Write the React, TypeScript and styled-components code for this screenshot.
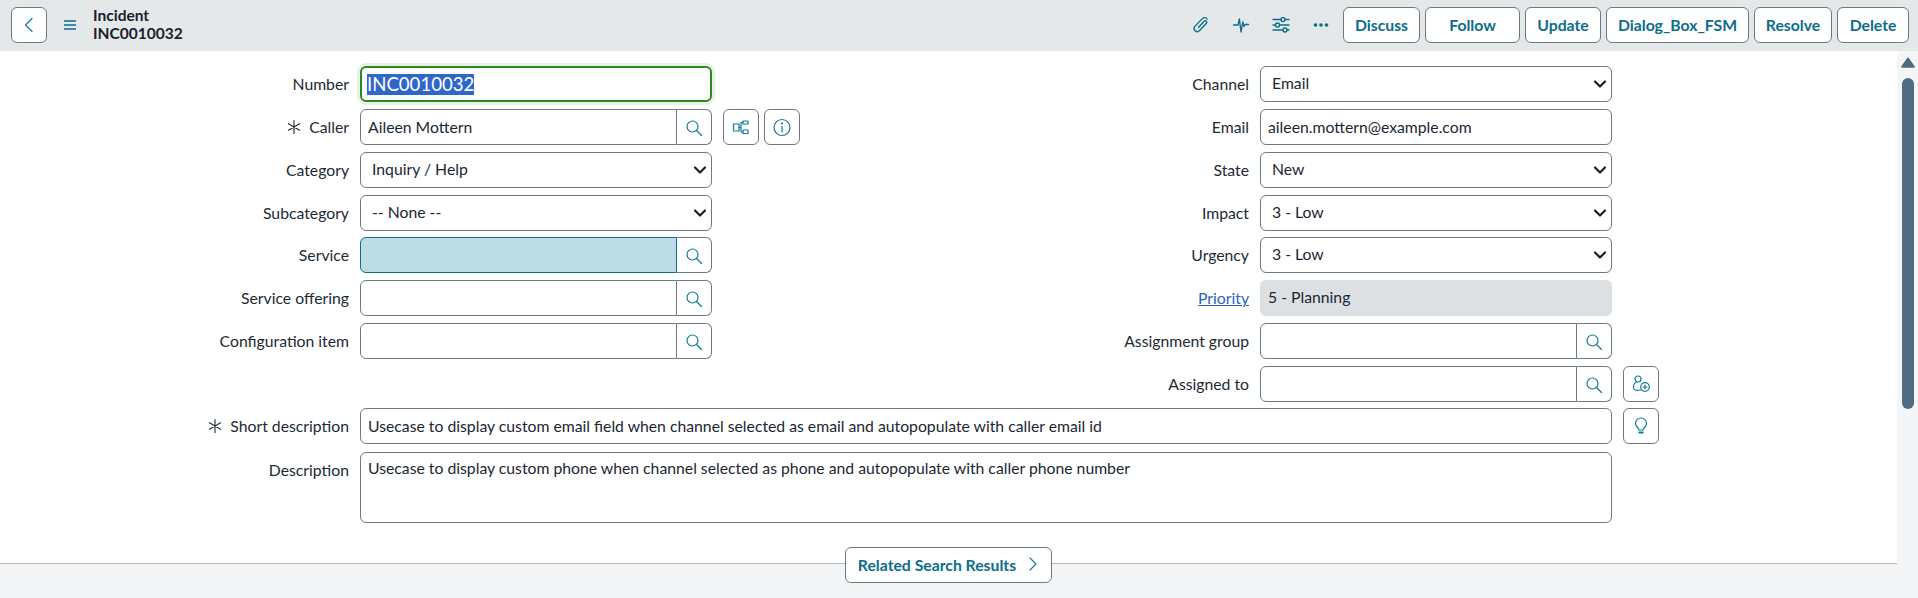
import React from "react";
import styled, { createGlobalStyle } from "styled-components";

const Global = createGlobalStyle`
  html, body { margin: 0; padding: 0; height: 100%; overflow: hidden; background: #fff; }
  * { box-sizing: border-box; }
  #root { height: 100%; }
`;

const TEAL = "#0c6d8c";
const ICON = "#137a9c";
const BORDER = "#6e7a83";
const TEXT = "#1a2733";
const FS = "15.75px";

const Page = styled.div`
  height: 598px;
  display: flex;
  flex-direction: column;
  font-family: Lato, "Liberation Sans", sans-serif;
  color: ${TEXT};
`;
const Header = styled.header`
  height: 51px;
  flex: none;
  background: #e4e8e9;
  display: flex;
  align-items: center;
  padding: 0 9px 1px 11px;
`;
const BackButton = styled.button`
  width: 36px;
  height: 36px;
  padding: 0;
  border: 1px solid ${BORDER};
  border-radius: 6px;
  background: #fff;
  display: flex;
  align-items: center;
  justify-content: center;
`;
const MenuIcon = styled.span`
  display: flex;
  margin: 0 16px 0 16px;
`;
const Title = styled.div`
  font-size: 15.5px;
  line-height: 18px;
  font-weight: 700;
  color: #17222c;
  margin-top: -2px;
`;
const Spacer = styled.div`
  flex: 1;
`;
const ToolIcons = styled.div`
  display: flex;
  align-items: center;
  margin-right: 2px;
`;
const ToolIcon = styled.span`
  width: 40px;
  display: flex;
  justify-content: center;
`;
const Actions = styled.div`
  display: flex;
  gap: 5px;
`;
const ActionButton = styled.button<{ $w: number }>`
  width: ${(p) => p.$w}px;
  height: 36px;
  padding: 0 0 2px;
  border: 1px solid ${BORDER};
  border-radius: 6px;
  background: #fff;
  color: ${TEAL};
  font: 700 ${FS} Lato, sans-serif;
`;
const Body = styled.div`
  flex: 1;
  display: flex;
  min-height: 0;
`;
const Main = styled.main`
  flex: 1;
  position: relative;
  display: flex;
  flex-direction: column;
  min-width: 0;
`;
const FormArea = styled.form`
  height: 513px;
  flex: none;
  background: #fff;
  border-bottom: 1px solid #b3b8bc;
  padding-top: 15.4px;
`;
const Footer = styled.div`
  flex: 1;
  background: #f4f5f7;
`;
const Columns = styled.div`
  display: grid;
  grid-template-columns: 900px 1fr;
`;
const Column = styled.div`
  display: flex;
  flex-direction: column;
  gap: 6.75px;
`;
const FullRows = styled.div`
  display: flex;
  flex-direction: column;
  gap: 8px;
  margin-top: 6.75px;
`;
const Field = styled.div<{ $wide?: boolean }>`
  display: flex;
  align-items: flex-start;
  height: ${(p) => (p.$wide ? "auto" : "36px")};
`;
const Label = styled.label`
  width: 349px;
  flex: none;
  height: 36px;
  padding-bottom: 1px;
  display: flex;
  align-items: center;
  justify-content: flex-end;
  gap: 7px;
  margin-right: 11px;
  font-size: ${FS};
  color: #1d2a35;
`;
const LinkLabel = styled.a`
  color: #2b63c4;
  text-decoration: underline;
`;
const Control = styled.div<{ $w: number }>`
  width: ${(p) => p.$w}px;
  flex: none;
  position: relative;
`;
const TextInput = styled.input`
  display: block;
  width: 100%;
  height: 36px;
  padding: 0 7px 2px;
  border: 1px solid ${BORDER};
  border-radius: 6px;
  background: #fff;
  color: ${TEXT};
  font: ${FS} Lato, sans-serif;
  outline: none;
`;
const FocusBox = styled.div`
  height: 36px;
  padding: 0 5px;
  border: 2px solid #2b8a1e;
  border-radius: 6px;
  background: #fff;
  box-shadow: 0 0 0 3px #e7f1e4;
  display: flex;
  align-items: center;
  font-size: 18.6px;
`;
const Selected = styled.span`
  background: #2f66cc;
  color: #fff;
  line-height: 21px;
`;
const ReadOnly = styled.div`
  height: 36px;
  padding: 0 8px 3px;
  border-radius: 6px;
  background: #dde0e3;
  display: flex;
  align-items: center;
  font-size: ${FS};
`;
const Select = styled.select`
  display: block;
  width: 100%;
  height: 36px;
  padding: 0 30px 3px 11px;
  border: 1px solid ${BORDER};
  border-radius: 6px;
  background: #fff;
  color: ${TEXT};
  font: ${FS} Lato, sans-serif;
  appearance: none;
  outline: none;
`;
const Chevron = styled.span`
  position: absolute;
  right: 5px;
  top: 11px;
  display: flex;
  pointer-events: none;
`;
const Lookup = styled.div`
  display: flex;
  height: 36px;
`;
const LookupInput = styled.input<{ $mandatory?: boolean }>`
  flex: 1;
  min-width: 0;
  height: 36px;
  padding: 0 7px 2px;
  border: 1px solid ${(p) => (p.$mandatory ? TEAL : BORDER)};
  border-radius: 6px 0 0 6px;
  background: ${(p) => (p.$mandatory ? "#bcdde6" : "#fff")};
  color: ${TEXT};
  font: ${FS} Lato, sans-serif;
  outline: none;
`;
const LookupButton = styled.button`
  width: 35px;
  flex: none;
  height: 36px;
  padding: 0;
  border: 1px solid ${BORDER};
  border-left: none;
  border-radius: 0 6px 6px 0;
  background: #fff;
  display: flex;
  align-items: center;
  justify-content: center;
`;
const SideButtons = styled.div<{ $offset: number }>`
  display: flex;
  gap: 5px;
  margin-left: ${(p) => p.$offset}px;
`;
const SideButton = styled.button`
  width: 36px;
  height: 36px;
  padding: 0;
  border: 1px solid ${BORDER};
  border-radius: 6px;
  background: #fff;
  display: flex;
  align-items: center;
  justify-content: center;
`;
const TextArea = styled.textarea`
  display: block;
  width: 100%;
  height: 71px;
  padding: 5px 7px;
  border: 1px solid ${BORDER};
  border-radius: 6px;
  background: #fff;
  color: ${TEXT};
  font: ${FS}/20px Lato, sans-serif;
  resize: none;
  outline: none;
`;
const Pill = styled.button`
  position: absolute;
  top: 496px;
  left: 845px;
  width: 207px;
  height: 36px;
  padding: 0 0 2px 1px;
  border: 1px solid ${BORDER};
  border-radius: 6px;
  background: #fff;
  color: ${TEAL};
  font: 700 ${FS} Lato, sans-serif;
  display: flex;
  align-items: center;
  justify-content: center;
  gap: 10px;
`;
const Scrollbar = styled.aside`
  width: 21px;
  flex: none;
  background: #f4f5f7;
  padding: 6px 4px 0 5px;
  display: flex;
  flex-direction: column;
  align-items: center;
`;
const ScrollArrow = styled.span`
  display: flex;
`;
const ScrollThumb = styled.div`
  width: 12px;
  height: 331px;
  margin-top: 10px;
  border-radius: 6px;
  background: #4f6b7f;
`;

const stroke = { fill: "none", stroke: ICON, strokeWidth: 1.2, strokeLinecap: "round" as const, strokeLinejoin: "round" as const };
const toolStroke = { ...stroke, stroke: TEAL, strokeWidth: 1.35 };

const SearchIcon = () => (
  <svg width="18" height="18" viewBox="0 -1 18 18" {...stroke}>
    <circle cx="7.5" cy="7.5" r="5.5" />
    <path d="M11.5 11.5 L16.5 16.5" />
  </svg>
);
const Star = () => (
  <svg width="16" height="16" viewBox="0 0 16 16" fill="none" stroke="#1d2a35" strokeWidth="1.1" strokeLinecap="round">
    <path d="M8 1.5V14.5M2.4 4.8L13.6 11.2M13.6 4.8L2.4 11.2" />
  </svg>
);
const DownChevron = () => (
  <svg width="14" height="14" viewBox="0 0 14 14" fill="none" stroke="#1a2026" strokeWidth="2.2" strokeLinecap="round" strokeLinejoin="round">
    <path d="M2 4.5L7 9.5L12 4.5" />
  </svg>
);

function SelectBox({ value, options }: { value: string; options?: string[] }) {
  return (
    <Control $w={351.5}>
      <Select defaultValue={value}>
        {(options || [value]).map((o) => (
          <option key={o}>{o}</option>
        ))}
      </Select>
      <Chevron>
        <DownChevron />
      </Chevron>
    </Control>
  );
}
function LookupBox({ value, mandatory }: { value?: string; mandatory?: boolean }) {
  return (
    <Control $w={351.5}>
      <Lookup>
        <LookupInput $mandatory={mandatory} defaultValue={value} />
        <LookupButton type="button" aria-label="Search">
          <SearchIcon />
        </LookupButton>
      </Lookup>
    </Control>
  );
}

const ACTIONS: [string, number][] = [
  ["Discuss", 77],
  ["Follow", 95],
  ["Update", 76],
  ["Dialog_Box_FSM", 143],
  ["Resolve", 78],
  ["Delete", 72],
];

export default function App() {
  return (
    <Page>
      <Global />
      <Header>
        <BackButton aria-label="Back">
          <svg width="18" height="18" viewBox="0 0 18 18" {...stroke}>
            <path d="M12 2.5L5.5 9L12 15.5" />
          </svg>
        </BackButton>
        <MenuIcon>
          <svg width="14" height="12" viewBox="0 0 14 12" fill="none" stroke={TEAL} strokeWidth="1.3">
            <path d="M1 2H13M1 6H13M1 10H13" />
          </svg>
        </MenuIcon>
        <Title>
          Incident
          <br />
          INC0010032
        </Title>
        <Spacer />
        <ToolIcons>
          <ToolIcon>
            <svg width="18" height="18" viewBox="0 0 18 18" {...toolStroke}>
              <path d="M6.6 11.2L12.2 5.2A1.5 1.5 0 0 1 14.4 7.3L7.4 14.8A3.2 3.2 0 0 1 2.8 10.4L10.4 2.6A3 3 0 0 1 15.2 3" />
            </svg>
          </ToolIcon>
          <ToolIcon>
            <svg width="18" height="18" viewBox="0 0 18 18" {...toolStroke}>
              <path d="M1.5 9H6L7.4 3L9 16L10.8 6L12 10.5L13.2 8.5H16.5" />
            </svg>
          </ToolIcon>
          <ToolIcon>
            <svg width="18" height="16" viewBox="0 0 18 16" {...toolStroke}>
              <path d="M1 2.5H9M13 2.5H17M1 8H3.5M7.5 8H17M1 13H11M15 13H17" />
              <circle cx="11" cy="2.5" r="2" />
              <circle cx="5.5" cy="8" r="2" />
              <circle cx="13" cy="13" r="2" />
            </svg>
          </ToolIcon>
          <ToolIcon>
            <svg width="16" height="4" viewBox="0 0 16 4" fill={TEAL}>
              <circle cx="2.5" cy="2" r="1.8" />
              <circle cx="8" cy="2" r="1.8" />
              <circle cx="13.5" cy="2" r="1.8" />
            </svg>
          </ToolIcon>
        </ToolIcons>
        <Actions>
          {ACTIONS.map(([t, w]) => (
            <ActionButton key={t} $w={w}>
              {t}
            </ActionButton>
          ))}
        </Actions>
      </Header>
      <Body>
        <Main>
          <FormArea>
            <Columns>
              <Column>
                <Field>
                  <Label>Number</Label>
                  <Control $w={351.5}>
                    <FocusBox>
                      <Selected>INC0010032</Selected>
                    </FocusBox>
                  </Control>
                </Field>
                <Field>
                  <Label>
                    <Star />
                    Caller
                  </Label>
                  <LookupBox value="Aileen Mottern" />
                  <SideButtons $offset={11}>
                    <SideButton type="button" aria-label="Show related">
                      <svg width="18" height="18" viewBox="0 0 18 18" {...stroke}>
                        <rect x="1.5" y="6" width="5.5" height="7" />
                        <rect x="11" y="3" width="5" height="3" />
                        <rect x="11" y="12" width="5" height="3.5" />
                        <path d="M7 9.5H9M9 4.5V14M9 4.5H11M9 14H11" />
                      </svg>
                    </SideButton>
                    <SideButton type="button" aria-label="Info">
                      <svg width="20" height="20" viewBox="0 0 20 20" {...stroke}>
                        <circle cx="10" cy="10.5" r="8" />
                        <path d="M10 9.5V15" />
                        <circle cx="10" cy="6.5" r=".5" />
                      </svg>
                    </SideButton>
                  </SideButtons>
                </Field>
                <Field>
                  <Label>Category</Label>
                  <SelectBox value="Inquiry / Help" />
                </Field>
                <Field>
                  <Label>Subcategory</Label>
                  <SelectBox value="-- None --" />
                </Field>
                <Field>
                  <Label>Service</Label>
                  <LookupBox mandatory />
                </Field>
                <Field>
                  <Label>Service offering</Label>
                  <LookupBox />
                </Field>
                <Field>
                  <Label>Configuration item</Label>
                  <LookupBox />
                </Field>
                <Field />
              </Column>
              <Column>
                <Field>
                  <Label>Channel</Label>
                  <SelectBox value="Email" />
                </Field>
                <Field>
                  <Label>Email</Label>
                  <Control $w={351.5}>
                    <TextInput defaultValue="aileen.mottern@example.com" />
                  </Control>
                </Field>
                <Field>
                  <Label>State</Label>
                  <SelectBox value="New" />
                </Field>
                <Field>
                  <Label>Impact</Label>
                  <SelectBox value="3 - Low" />
                </Field>
                <Field>
                  <Label>Urgency</Label>
                  <SelectBox value="3 - Low" />
                </Field>
                <Field>
                  <Label>
                    <LinkLabel href="#">Priority</LinkLabel>
                  </Label>
                  <Control $w={351.5}>
                    <ReadOnly>5 - Planning</ReadOnly>
                  </Control>
                </Field>
                <Field>
                  <Label>Assignment group</Label>
                  <LookupBox />
                </Field>
                <Field>
                  <Label>Assigned to</Label>
                  <LookupBox />
                  <SideButtons $offset={11}>
                    <SideButton type="button" aria-label="Assign to me">
                      <svg width="20" height="20" viewBox="0 0 20 20" {...stroke}>
                        <circle cx="7" cy="5" r="3" />
                        <path d="M5.5 8C2.5 9 1.8 13 3 15C4 16.5 7 16.5 9.5 16" />
                        <circle cx="14" cy="13" r="4.3" />
                        <path d="M14 11V15M12 13H16" />
                      </svg>
                    </SideButton>
                  </SideButtons>
                </Field>
              </Column>
            </Columns>
            <FullRows>
              <Field>
                <Label>
                  <Star />
                  Short description
                </Label>
                <Control $w={1252}>
                  <TextInput defaultValue="Usecase to display custom email field when channel selected as email and autopopulate with caller email id" />
                </Control>
                <SideButtons $offset={11}>
                  <SideButton type="button" aria-label="Suggestion">
                    <svg width="18" height="20" viewBox="0 0 18 20" {...stroke}>
                      <path d="M7 14C6.8 12 3.5 10.5 3.5 7.5A5.5 5.5 0 0 1 14.5 7.5C14.5 10.5 11.2 12 11 14Z" />
                      <path d="M7.2 16.5H10.8" strokeWidth="1.8" />
                    </svg>
                  </SideButton>
                </SideButtons>
              </Field>
              <Field $wide>
                <Label>Description</Label>
                <Control $w={1252}>
                  <TextArea defaultValue="Usecase to display custom phone when channel selected as phone and autopopulate with caller phone number" />
                </Control>
              </Field>
            </FullRows>
          </FormArea>
          <Footer />
          <Pill type="button">
            Related Search Results
            <svg width="14" height="14" viewBox="0 0 14 14" {...stroke}>
              <path d="M4 1L10 7L4 13" />
            </svg>
          </Pill>
        </Main>
        <Scrollbar>
          <ScrollArrow>
            <svg width="14" height="11" viewBox="0 0 14 11" fill="#4f6b7f" stroke="#4f6b7f" strokeWidth="2" strokeLinejoin="round">
              <path d="M7 1.5L12.8 9.8H1.2Z" />
            </svg>
          </ScrollArrow>
          <ScrollThumb />
        </Scrollbar>
      </Body>
    </Page>
  );
}
